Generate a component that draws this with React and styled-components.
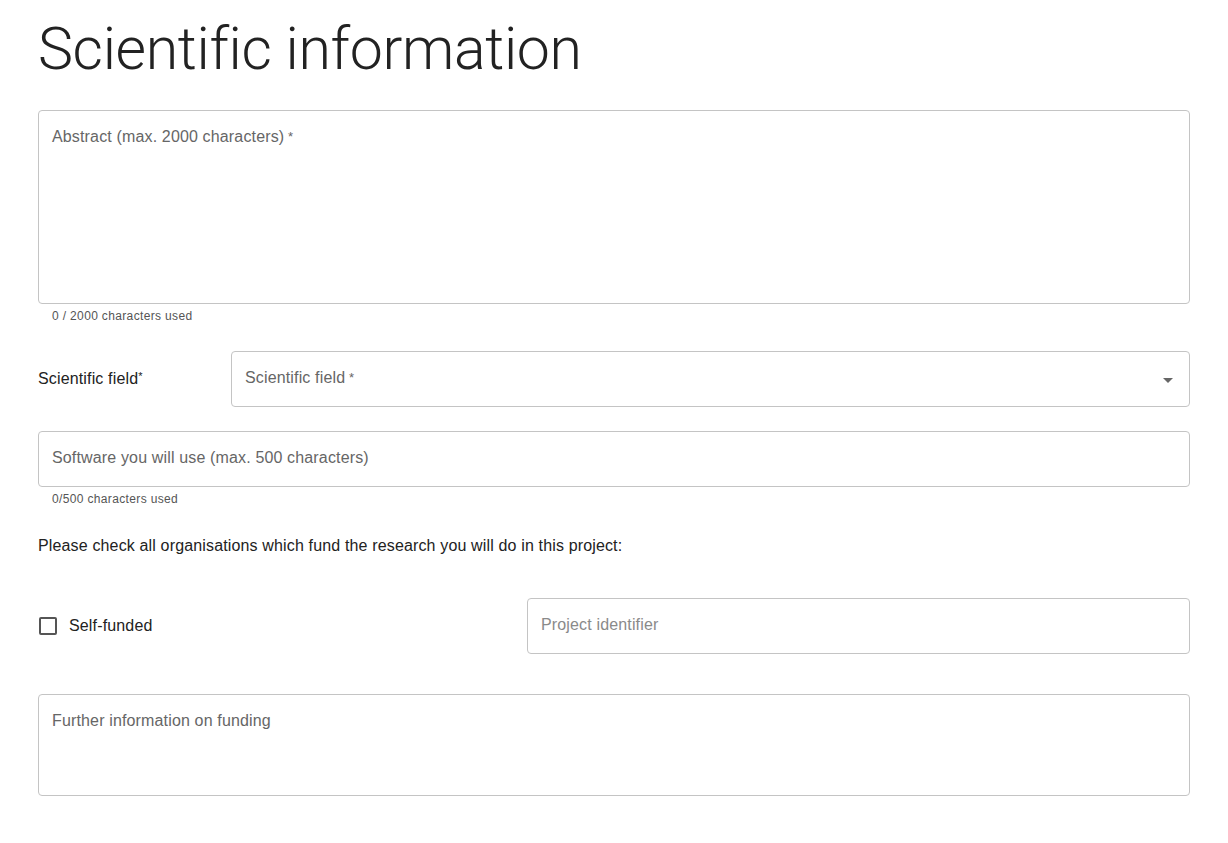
import React, { useState } from "react"
import styled, { createGlobalStyle } from "styled-components"

const GlobalStyle = createGlobalStyle`
  body {
    margin: 0;
    background: #fff;
    font-family: "Liberation Sans", Arial, sans-serif;
    color: #222;
    letter-spacing: 0.15px;
  }
`

function App() {
  const [abstract, setAbstract] = useState("")
  const [software, setSoftware] = useState("")
  const [selfFunded, setSelfFunded] = useState(false)

  return (
    <Page>
      <GlobalStyle />
      <Title>Scientific information</Title>

      <FieldGroup>
        <Box height="194px">
          <FieldLabel>Abstract (max. 2000 characters)<Star> *</Star></FieldLabel>
          <TextArea value={abstract} onChange={(e) => setAbstract(e.target.value)} />
        </Box>
        <Helper>{abstract.length} / 2000 characters used</Helper>
      </FieldGroup>

      <SelectRow>
        <SideLabel>Scientific field<small>*</small></SideLabel>
        <Box height="56px" grow>
          <FieldLabel>Scientific field<Star> *</Star></FieldLabel>
          <Arrow viewBox="0 0 24 24">
            <path d="M7 10l5 5 5-5z" fill="#666" />
          </Arrow>
        </Box>
      </SelectRow>

      <FieldGroup>
        <Box height="56px">
          <FieldLabel>Software you will use (max. 500 characters)</FieldLabel>
          <TextArea value={software} onChange={(e) => setSoftware(e.target.value)} />
        </Box>
        <Helper>{software.length}/500 characters used</Helper>
      </FieldGroup>

      <Intro>Please check all organisations which fund the research you will do in this project:</Intro>

      <FundRow>
        <CheckLabel>
          <Check checked={selfFunded} onClick={() => setSelfFunded(!selfFunded)} />
          Self-funded
        </CheckLabel>
        <Box height="56px" grow>
          <FieldLabel light>Project identifier</FieldLabel>
        </Box>
      </FundRow>

      <Box height="102px">
        <FieldLabel>Further information on funding</FieldLabel>
      </Box>
    </Page>
  )
}

export default App

const Page = styled.div`
  padding: 0 38px 40px 38px;
  display: flex;
  flex-direction: column;
`

const Title = styled.h1`
  font-family: "Roboto", "Liberation Sans", sans-serif;
  font-weight: 300;
  font-size: 59px;
  line-height: 1;
  margin: 19px 0 32px 0;
  color: #222;
  letter-spacing: -0.35px;
`

const FieldGroup = styled.div`
  display: flex;
  flex-direction: column;
  margin-bottom: 24px;
`

const Box = styled.div`
  position: relative;
  height: ${(p) => p.height};
  flex: ${(p) => (p.grow ? 1 : "none")};
  border: 1px solid #c4c4c4;
  border-radius: 4px;
  box-sizing: border-box;
`

const FieldLabel = styled.div`
  position: absolute;
  left: 13px;
  top: 16px;
  font-size: 16px;
  line-height: 19px;
  color: ${(p) => (p.light ? "#8a8a8a" : "#666")};
  pointer-events: none;
`

const Star = styled.span`
  font-size: 13px;
  vertical-align: top;
`

const TextArea = styled.textarea`
  width: 100%;
  height: 100%;
  border: none;
  background: transparent;
  resize: none;
  outline: none;
  box-sizing: border-box;
  padding: 16px 13px;
  font: inherit;
`

const Helper = styled.div`
  font-size: 12px;
  letter-spacing: 0.35px;
  color: #555;
  margin: 5px 0 0 14px;
  line-height: 14px;
`

const SelectRow = styled.div`
  display: flex;
  align-items: center;
  margin: 4px 0 24px 0;
`

const SideLabel = styled.div`
  width: 193px;
  font-size: 16px;
  color: #222;
  small {
    font-size: 11px;
    vertical-align: top;
  }
`

const Arrow = styled.svg`
  position: absolute;
  right: 9px;
  top: 16px;
  width: 24px;
  height: 24px;
`

const Intro = styled.p`
  font-size: 16px;
  color: #222;
  margin: 6px 0 43px 0;
  line-height: 19px;
`

const FundRow = styled.div`
  display: flex;
  align-items: center;
  margin-bottom: 40px;
`

const CheckLabel = styled.label`
  width: 488px;
  display: flex;
  align-items: center;
  gap: 12px;
  font-size: 16px;
  color: #222;
  padding-left: 1px;
  cursor: pointer;
`

const Check = styled.span`
  width: 18px;
  height: 18px;
  box-sizing: border-box;
  border: 2px solid #555;
  border-radius: 2px;
  background: ${(p) => (p.checked ? "#555" : "#fff")};
`
